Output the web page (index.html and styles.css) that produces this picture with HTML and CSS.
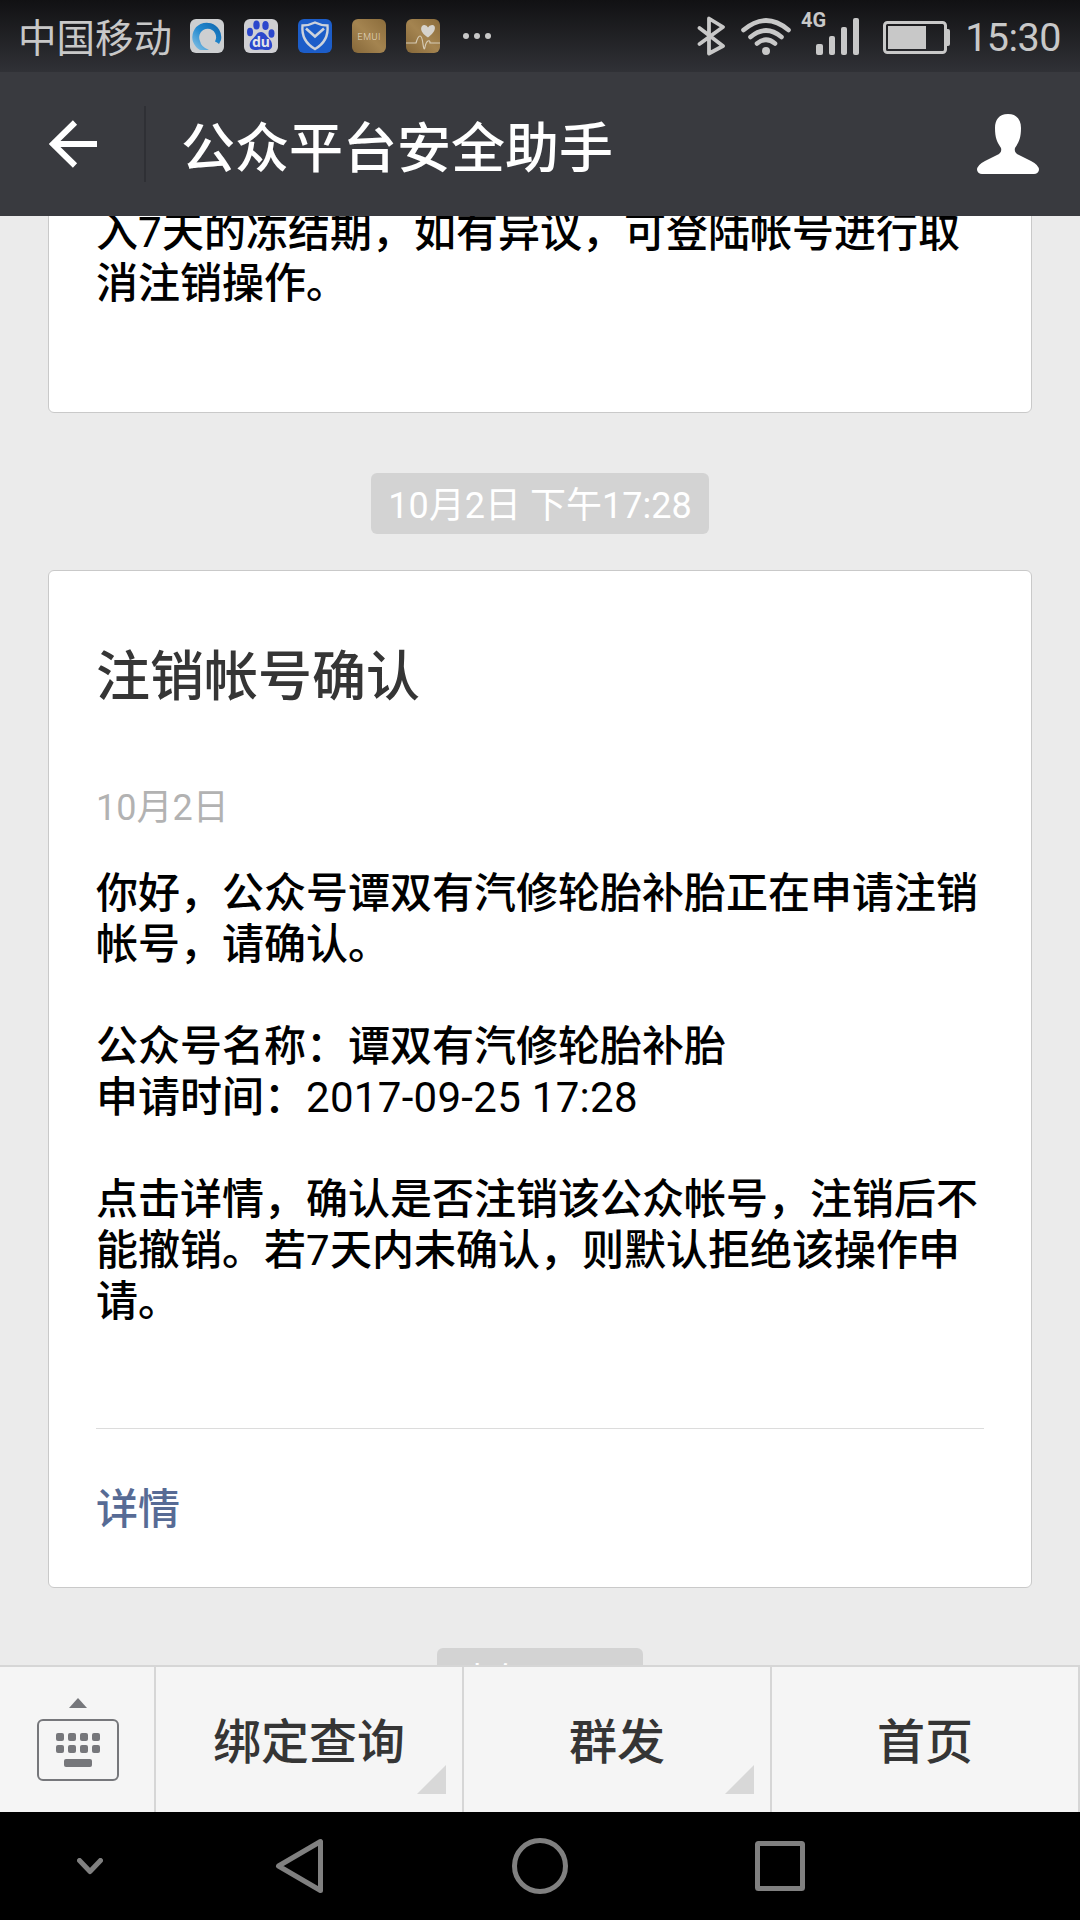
FILE: index.html
```
<!DOCTYPE html>
<html lang="zh-CN">
<head>
    <meta charset="UTF-8">
    <title>公众平台安全助手</title>
    <link rel="stylesheet" href="styles.css">
</head>
<body>
<div class="phone">
    <!-- 状态栏 -->
    <div class="status">
        <span class="carrier">中国移动</span>
        <div class="apps">
            <svg width="34" height="34" viewBox="0 0 34 34">
                <defs>
                    <linearGradient id="ring" x1="0" y1="1" x2="1" y2="0">
                        <stop offset="0" stop-color="#8cc6e6"/>
                        <stop offset="0.5" stop-color="#2389cf"/>
                        <stop offset="1" stop-color="#0a62ab"/>
                    </linearGradient>
                </defs>
                <rect width="34" height="34" rx="6" fill="#cdcfd1"/>
                <path d="M10 31A14.500 14.500 0 1 1 31 21L29 25Q27 23 25 22.500A8.500 8.500 0 1 0 10 22Q11 28 19 31Z" fill="url(#ring)"/>
            </svg>
            <svg width="34" height="34" viewBox="0 0 34 34">
                <rect width="34" height="34" rx="6" fill="#cfcfd3"/>
                <g fill="#2b47cc">
                    <ellipse cx="12.500" cy="6" rx="3.200" ry="4.600"/>
                    <ellipse cx="21.500" cy="6.500" rx="3.200" ry="4.600"/>
                    <ellipse cx="6" cy="13" rx="3" ry="4.200"/>
                    <ellipse cx="27.500" cy="14.500" rx="3" ry="4.200"/>
                    <path d="M17 13C21 13 22 17 25 19.500C29 23 30 31 23 31C20 31 19 30.500 17 30.500S14 31 11 31C4 31 4.500 23 9 19.500C12 17 13 13 17 13Z"/>
                </g>
                <text class="du" x="17" y="28" text-anchor="middle">du</text>
            </svg>
            <svg width="34" height="34" viewBox="0 0 34 34">
                <rect width="34" height="34" rx="6" fill="#1c5dc9"/>
                <path d="M17 3.500Q23 6.500 29.500 6.500Q31 22 17 30Q3 22 4.500 6.500Q11 6.500 17 3.500Z" fill="none" stroke="#cdd3dc" stroke-width="2.400"/>
                <path d="M8 9.500L17 17.500L26 9.500" fill="none" stroke="#cdd3dc" stroke-width="2.600"/>
            </svg>
            <svg width="34" height="34" viewBox="0 0 34 34">
                <defs>
                    <linearGradient id="gold" x1="0" y1="1" x2="1" y2="0">
                        <stop offset="0" stop-color="#856739"/>
                        <stop offset="0.5" stop-color="#a48450"/>
                        <stop offset="1" stop-color="#8b6c3b"/>
                    </linearGradient>
                </defs>
                <rect width="34" height="34" rx="6" fill="url(#gold)"/>
                <text class="emui" x="17" y="21" text-anchor="middle" textLength="23">EMUI</text>
            </svg>
            <svg width="34" height="34" viewBox="0 0 34 34">
                <rect width="34" height="34" rx="6" fill="url(#gold)"/>
                <path d="M22 18.500C12 12 15 6 18.500 6Q21 6 22 8.500Q23 6 26 6C30 6 31 12 22 18.500Z" fill="#d6d3cc"/>
                <path d="M0 24H10Q12 17 14 17T17 25T19 28T22 22T24 24H34" fill="none" stroke="#d6cbb5" stroke-width="1.200"/>
            </svg>
        </div>
        <svg class="more" width="28" height="6" viewBox="0 0 28 6" fill="#c8c8c8">
            <circle cx="3" cy="3" r="3"/><circle cx="14" cy="3" r="3"/><circle cx="25" cy="3" r="3"/>
        </svg>
        <svg class="signals" width="254" height="50" viewBox="698 8 254 50">
            <path d="M700.500 28L724 46L710 53.500V18.500L724 27L700.500 44" fill="none" stroke="#c8c8c8" stroke-width="3.800" stroke-linejoin="round" stroke-linecap="round"/>
            <g fill="none" stroke="#c8c8c8" stroke-width="4.600" stroke-linecap="round">
                <path d="M744.500 30Q767 11 789.500 30"/>
                <path d="M751.500 37Q767 24 782.500 37"/>
                <path d="M758 43.500Q767 36 776 43.500"/>
            </g>
            <circle cx="767" cy="51" r="4" fill="#c8c8c8"/>
            <text class="net" x="802" y="27">4G</text>
            <g fill="#c8c8c8">
                <rect x="817" y="44" width="7" height="11" rx="2"/>
                <rect x="830" y="36" width="6" height="19" rx="2"/>
                <rect x="842" y="27" width="6" height="28" rx="2"/>
                <rect x="854" y="18" width="6" height="37" rx="2"/>
                <rect x="889" y="26" width="38" height="23"/>
                <path d="M947 29H949Q951 29 951 31V44Q951 46 949 46H947Z"/>
            </g>
            <rect x="885.500" y="22.500" width="61" height="30" rx="3" fill="none" stroke="#c8c8c8" stroke-width="3"/>
        </svg>
        <span class="clock">15:30</span>
    </div>

    <!-- 标题栏 -->
    <div class="header">
        <svg class="back" width="48" height="48" viewBox="0 0 48 48" fill="none" stroke="#fff" stroke-width="6">
            <path d="M26 2.500L4 24L26 45.500M3 24H48"/>
        </svg>
        <span class="line"></span>
        <h1>公众平台安全助手</h1>
        <svg class="user" width="62" height="60" viewBox="0 0 62 60">
            <path d="M31 0C40 0 44 6 44 14C44 24 42 28 38 34Q37 38 40 40Q46 43 54 47Q62 51 62 56Q61 60 57 60H5Q1 60 0 56Q0 51 8 47Q16 43 22 40Q25 38 24 34C20 28 18 24 18 14C18 6 22 0 31 0Z" fill="#fff"/>
        </svg>
    </div>

    <!-- 消息列表 -->
    <div class="chat">
        <div class="card card-prev">
            <p>入<span class="num">7</span>天的冻结期，如有异议，可登陆帐号进行取<br>消注销操作。</p>
        </div>
        <div class="time">10月2日 下午17:28</div>
        <div class="card">
            <h2>注销帐号确认</h2>
            <div class="date">10月2日</div>
            <p>你好，公众号谭双有汽修轮胎补胎正在申请注销<br>帐号，请确认。</p>
            <p>公众号名称：谭双有汽修轮胎补胎<br>申请时间：<span class="num">2017-09-25 17:28</span></p>
            <p>点击详情，确认是否注销该公众帐号，注销后不<br>能撤销。若<span class="num">7</span>天内未确认，则默认拒绝该操作申<br>请。</p>
            <a class="detail">详情</a>
        </div>
        <div class="time time-next">中午12:28</div>
    </div>

    <!-- 底部菜单 -->
    <div class="menu">
        <div class="key">
            <svg width="82" height="84" viewBox="0 0 82 84" fill="#76777b">
                <path d="M32 10L41 0L50 10Z"/>
                <rect x="1" y="22" width="80" height="60" rx="5" fill="none" stroke="#76777b" stroke-width="2"/>
                <rect x="19" y="35" width="8" height="8" rx="2"/>
                <rect x="31" y="35" width="8" height="8" rx="2"/>
                <rect x="43" y="35" width="8" height="8" rx="2"/>
                <rect x="55" y="35" width="8" height="8" rx="2"/>
                <rect x="19" y="47" width="8" height="8" rx="2"/>
                <rect x="31" y="47" width="8" height="8" rx="2"/>
                <rect x="43" y="47" width="8" height="8" rx="2"/>
                <rect x="55" y="47" width="8" height="8" rx="2"/>
                <rect x="27" y="61" width="28" height="8" rx="2"/>
            </svg>
        </div>
        <div class="item sub">绑定查询</div>
        <div class="item sub">群发</div>
        <div class="item">首页</div>
    </div>

    <!-- 系统导航 -->
    <div class="nav">
        <svg width="26" height="17" viewBox="0 0 26 17"><path d="M2.500 2.500L13 13.500L23.500 2.500"/></svg>
        <svg width="50" height="56" viewBox="0 0 50 56"><path d="M45.500 3.500V52.500L3.500 28Z"/></svg>
        <svg width="56" height="56" viewBox="0 0 56 56"><circle cx="28" cy="28" r="25.500"/></svg>
        <svg width="50" height="50" viewBox="0 0 50 50"><rect x="2.500" y="2.500" width="45" height="45" rx="1"/></svg>
    </div>
</div>
</body>
</html>
```
FILE: styles.css
```
*{
    margin: 0;
    padding: 0;
    box-sizing: border-box;
}
body{
    font-family: Roboto, "Noto Sans CJK SC", sans-serif;
    background-color: #ebebeb;
}
svg{
    display: block;
    flex: none;
}
.phone{
    display: flex;
    flex-direction: column;
    width: 1080px;
    height: 1920px;
    overflow: hidden;
}

/* 状态栏 */
.status{
    display: flex;
    flex: none;
    height: 72px;
    padding: 0 19px 0 18px;
    background: linear-gradient(#111113, #303136);
    color: #c8c8c8;
}
.carrier{
    width: 172px;
    font-size: 38.5px;
    line-height: 77px;
    white-space: nowrap;
}
.apps{
    display: flex;
    gap: 20px;
    padding-top: 19px;
}
.more{
    margin: 33px 0 0 23px;
}
.signals{
    margin: 8px 14px 0 auto;
}
.clock{
    font-size: 39.5px;
    line-height: 76px;
    letter-spacing: -0.5px;
}
.du{
    font: bold 14px "Noto Sans", sans-serif;
    fill: #e4e4ea;
}
.emui{
    font: 300 9px Roboto, sans-serif;
    fill: #e6dcc4;
}
.net{
    font: bold 20px Roboto, sans-serif;
    fill: #c8c8c8;
}

/* 标题栏 */
.header{
    display: flex;
    flex: none;
    align-items: center;
    height: 144px;
    padding: 0 41px 0 49px;
    background-color: #393a3f;
}
.line{
    width: 2px;
    height: 76px;
    margin: 0 35px 0 47px;
    background-color: #2f3035;
}
h1{
    flex: 1;
    font-size: 54px;
    font-weight: 500;
    color: #fff;
}

/* 消息列表 */
.chat{
    flex: 1;
    padding: 0 48px;
    overflow: hidden;
}
.card{
    padding: 62px 47px 0;
    height: 1018px;
    border: 1px solid #c9c9c9;
    border-radius: 6px;
    background-color: #fff;
}
.card-prev{
    height: 245px;
    margin-top: -48px;
    padding-top: 38px;
}
.card p{
    margin-bottom: 51px;
    font-size: 42px;
    font-weight: 500;
    line-height: 51px;
    color: #000;
    white-space: nowrap;
}
.num{
    font-weight: 400;
    letter-spacing: 0.3px;
}
.time{
    width: 338px;
    height: 61px;
    margin: 60px auto 36px;
    border-radius: 6px;
    background-color: #d3d3d3;
    color: #fff;
    font-size: 36px;
    line-height: 66px;
    text-align: center;
}
.time-next{
    width: 206px;
    margin-bottom: 0;
    line-height: 68px;
}
h2{
    font-size: 54px;
    font-weight: 500;
    line-height: 90px;
    color: #353535;
}
.date{
    margin: 60px 0 35px;
    font-size: 36px;
    line-height: 50px;
    color: #b2b2b2;
}
.detail{
    display: block;
    margin-top: 101px;
    border-top: 1px solid #dcdcdc;
    font-size: 42px;
    font-weight: 500;
    line-height: 161px;
    color: #576b95;
}

/* 底部菜单 */
.menu{
    display: flex;
    flex: none;
    height: 147px;
    border-top: 2px solid #d6d6d6;
    background-color: #f5f5f5;
}
.key{
    width: 156px;
    padding: 31px 0 0 37px;
    border-right: 2px solid #d6d6d6;
}
.item{
    position: relative;
    flex: 1;
    border-right: 2px solid #d6d6d6;
    font-size: 48px;
    font-weight: 500;
    line-height: 152px;
    text-align: center;
    color: #353535;
}
.sub:after{
    content: "";
    position: absolute;
    right: 16px;
    bottom: 18px;
    border-left: 29px solid transparent;
    border-bottom: 29px solid #d8d8d8;
}

/* 系统导航 */
.nav{
    display: flex;
    flex: none;
    align-items: center;
    height: 108px;
    padding-left: 77px;
    background-color: #000;
    fill: none;
    stroke: #808080;
    stroke-width: 5;
    stroke-linecap: round;
    stroke-linejoin: round;
}
.nav svg:nth-child(2){
    margin: 0 187px 0 172px;
}
.nav svg:nth-child(3){
    margin-right: 187px;
}
```
